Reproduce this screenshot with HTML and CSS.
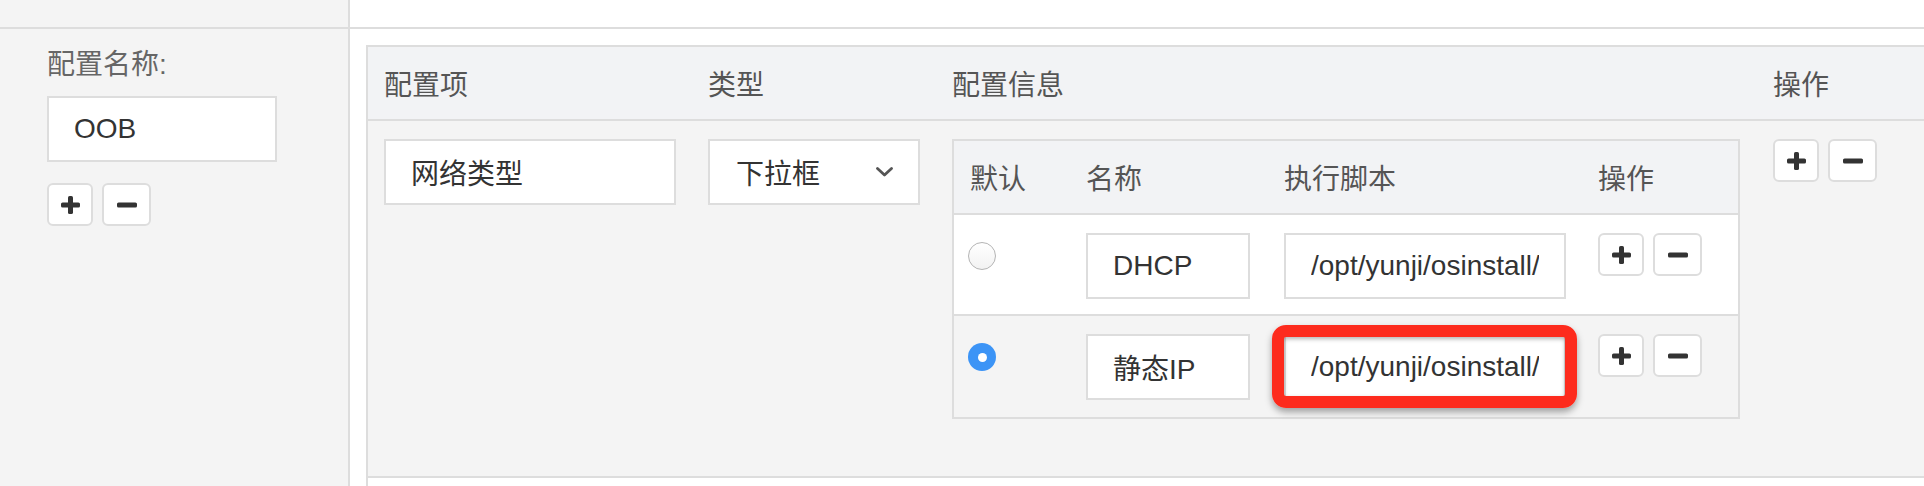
FILE: index.html
```html
<!DOCTYPE html>
<html lang="zh-CN">
<head>
<meta charset="utf-8">
<title>配置</title>
<link rel="stylesheet" href="styles.css">
</head>
<body>
<div class="page">
  <div class="side top-strip"></div>
  <div class="content top-strip"></div>

  <div class="side side-main">
    <div class="label">配置名称:</div>
    <input class="field name-field" value="OOB" readonly>
    <div class="btn-group">
      <button class="icon-btn plus" type="button"><svg width="19" height="18" viewBox="0 0 19 18"><rect x="0" y="6.5" width="19" height="5" rx="1.6"/><rect x="7" y="0" width="5" height="18" rx="1.6"/></svg></button>
      <button class="icon-btn minus" type="button"><svg width="20" height="6" viewBox="0 0 20 6"><rect x="0" y="0.5" width="20" height="5" rx="1.6"/></svg></button>
    </div>
  </div>

  <div class="content content-main">
    <div class="cfg-table">
      <div class="cfg-row cfg-head">
        <div class="cfg-cell">配置项</div>
        <div class="cfg-cell">类型</div>
        <div class="cfg-cell">配置信息</div>
        <div class="cfg-cell">操作</div>
      </div>
      <div class="cfg-row cfg-body">
        <div class="cfg-cell"><input class="field item-field" value="网络类型" readonly></div>
        <div class="cfg-cell">
          <div class="field select"><span>下拉框</span><svg width="17" height="10" viewBox="0 0 17 10"><polyline points="1.5,1.5 8.5,8 15.5,1.5" fill="none" stroke="#555" stroke-width="2.8" stroke-linecap="round" stroke-linejoin="round"/></svg></div>
        </div>
        <div class="cfg-cell">
          <div class="opt-table">
            <div class="opt-row opt-head">
              <div class="opt-cell">默认</div>
              <div class="opt-cell">名称</div>
              <div class="opt-cell">执行脚本</div>
              <div class="opt-cell">操作</div>
            </div>
            <div class="opt-row opt-odd">
              <div class="opt-cell"><span class="radio"></span></div>
              <div class="opt-cell"><input class="field opt-name" value="DHCP" readonly></div>
              <div class="opt-cell"><input class="field opt-script" value="/opt/yunji/osinstall/" readonly></div>
              <div class="opt-cell">
                <div class="btn-group">
                  <button class="icon-btn plus" type="button"><svg width="19" height="18" viewBox="0 0 19 18"><rect x="0" y="6.5" width="19" height="5" rx="1.6"/><rect x="7" y="0" width="5" height="18" rx="1.6"/></svg></button>
                  <button class="icon-btn minus" type="button"><svg width="20" height="6" viewBox="0 0 20 6"><rect x="0" y="0.5" width="20" height="5" rx="1.6"/></svg></button>
                </div>
              </div>
            </div>
            <div class="opt-row opt-even">
              <div class="opt-cell"><span class="radio checked"></span></div>
              <div class="opt-cell"><input class="field opt-name" value="静态IP" readonly></div>
              <div class="opt-cell">
                <div class="script-wrap">
                  <input class="field opt-script" value="/opt/yunji/osinstall/" readonly>
                  <span class="highlight"></span>
                </div>
              </div>
              <div class="opt-cell">
                <div class="btn-group">
                  <button class="icon-btn plus" type="button"><svg width="19" height="18" viewBox="0 0 19 18"><rect x="0" y="6.5" width="19" height="5" rx="1.6"/><rect x="7" y="0" width="5" height="18" rx="1.6"/></svg></button>
                  <button class="icon-btn minus" type="button"><svg width="20" height="6" viewBox="0 0 20 6"><rect x="0" y="0.5" width="20" height="5" rx="1.6"/></svg></button>
                </div>
              </div>
            </div>
          </div>
        </div>
        <div class="cfg-cell">
          <div class="btn-group">
            <button class="icon-btn plus" type="button"><svg width="19" height="18" viewBox="0 0 19 18"><rect x="0" y="6.5" width="19" height="5" rx="1.6"/><rect x="7" y="0" width="5" height="18" rx="1.6"/></svg></button>
            <button class="icon-btn minus" type="button"><svg width="20" height="6" viewBox="0 0 20 6"><rect x="0" y="0.5" width="20" height="5" rx="1.6"/></svg></button>
          </div>
        </div>
      </div>
      <div class="cfg-row cfg-empty"></div>
    </div>
  </div>
</div>
</body>
</html>
```

FILE: styles.css
```css
* { box-sizing: border-box; }

html, body {
  margin: 0;
  padding: 0;
  height: 486px;
  overflow: hidden;
  background: #fff;
}

body {
  font-family: "Liberation Sans", "Noto Sans CJK SC", sans-serif;
  font-size: 28px;
  color: #333;
}

.page {
  display: grid;
  grid-template-columns: 350px 1fr;
  grid-template-rows: 29px 457px;
  width: 1924px;
  height: 486px;
  overflow: hidden;
}

.side {
  background: #f4f4f4;
  border-right: 2px solid #dddddd;
}

.content {
  background: #fff;
  min-width: 0;
}

.top-strip {
  border-bottom: 2px solid #dddddd;
}

.side-main {
  padding: 19px 0 0 47px;
  display: flex;
  flex-direction: column;
  align-items: flex-start;
}

.label {
  color: #666;
  line-height: 34px;
  height: 34px;
}

.field {
  display: block;
  height: 66px;
  border: 2px solid #dddddd;
  background: #fff;
  padding: 0 25px;
  font: inherit;
  font-size: 28px;
  color: #333;
  border-radius: 0;
  outline: none;
  margin: 0;
}

.name-field {
  width: 230px;
  margin-top: 14px;
}

.side-main .btn-group {
  margin-top: 21px;
}

.btn-group {
  display: flex;
  gap: 9px;
}

.icon-btn {
  height: 43px;
  width: 46px;
  border: 2px solid #dddddd;
  border-radius: 6px;
  background: #fff;
  padding: 0;
  margin: 0;
  display: flex;
  align-items: center;
  justify-content: center;
  fill: #333;
}

.icon-btn.minus {
  width: 49px;
}

.content-main {
  padding: 16px 0 0 16px;
  overflow: hidden;
}

.cfg-table {
  width: 1600px;
  border: 2px solid #dddddd;
  border-right: none;
  border-bottom: none;
}

.cfg-row {
  display: grid;
  grid-template-columns: 324px 244px 821px 1fr;
}

.cfg-cell {
  padding: 0 16px;
  min-width: 0;
}

.cfg-head {
  height: 74px;
  background: #f2f3f5;
  border-bottom: 2px solid #dddddd;
  color: #555;
}

.cfg-head .cfg-cell {
  display: flex;
  align-items: center;
}

.cfg-body {
  height: 357px;
  background: #f4f4f4;
  border-bottom: 2px solid #dddddd;
  padding-top: 18px;
  align-items: start;
}

.cfg-empty {
  height: 40px;
  background: #fff;
}

.item-field {
  width: 292px;
}

.select {
  width: 212px;
  display: flex;
  align-items: center;
  justify-content: space-between;
  padding: 0 25px 0 26px;
}

.select svg {
  display: block;
}

.opt-table {
  width: 788px;
  border: 2px solid #dddddd;
  color: #555;
}

.opt-row {
  display: grid;
  grid-template-columns: 116px 198px 314px 1fr;
}

.opt-cell {
  padding: 0 16px;
  min-width: 0;
}

.opt-head {
  height: 74px;
  background: #f2f3f5;
  border-bottom: 2px solid #dddddd;
}

.opt-head .opt-cell {
  display: flex;
  align-items: center;
}

.opt-odd,
.opt-even {
  height: 101px;
  padding-top: 18px;
  align-items: start;
}

.opt-odd {
  background: #fff;
  border-bottom: 2px solid #dddddd;
}

.opt-even {
  background: #f4f4f4;
}

.opt-name {
  width: 164px;
}

.opt-script {
  width: 282px;
}

.radio {
  display: block;
  width: 28px;
  height: 28px;
  margin: 9px 0 0 -2px;
  border-radius: 50%;
  border: 1.5px solid #b4b4b4;
  background: linear-gradient(#ffffff, #f2f2f2);
}

.radio.checked {
  border: none;
  background: #3c94f6;
  display: flex;
  align-items: center;
  justify-content: center;
}

.radio.checked::after {
  content: "";
  width: 9px;
  height: 9px;
  border-radius: 50%;
  background: #fff;
}

.script-wrap {
  position: relative;
  width: 282px;
}

.highlight {
  position: absolute;
  left: -12px;
  right: -11px;
  top: -9px;
  bottom: -8px;
  border: 12px solid #fd2b1d;
  border-radius: 14px;
  box-shadow: 0 4px 7px rgba(0, 0, 0, 0.35), inset 0 2px 4px rgba(0, 0, 0, 0.3);
  pointer-events: none;
}
```
